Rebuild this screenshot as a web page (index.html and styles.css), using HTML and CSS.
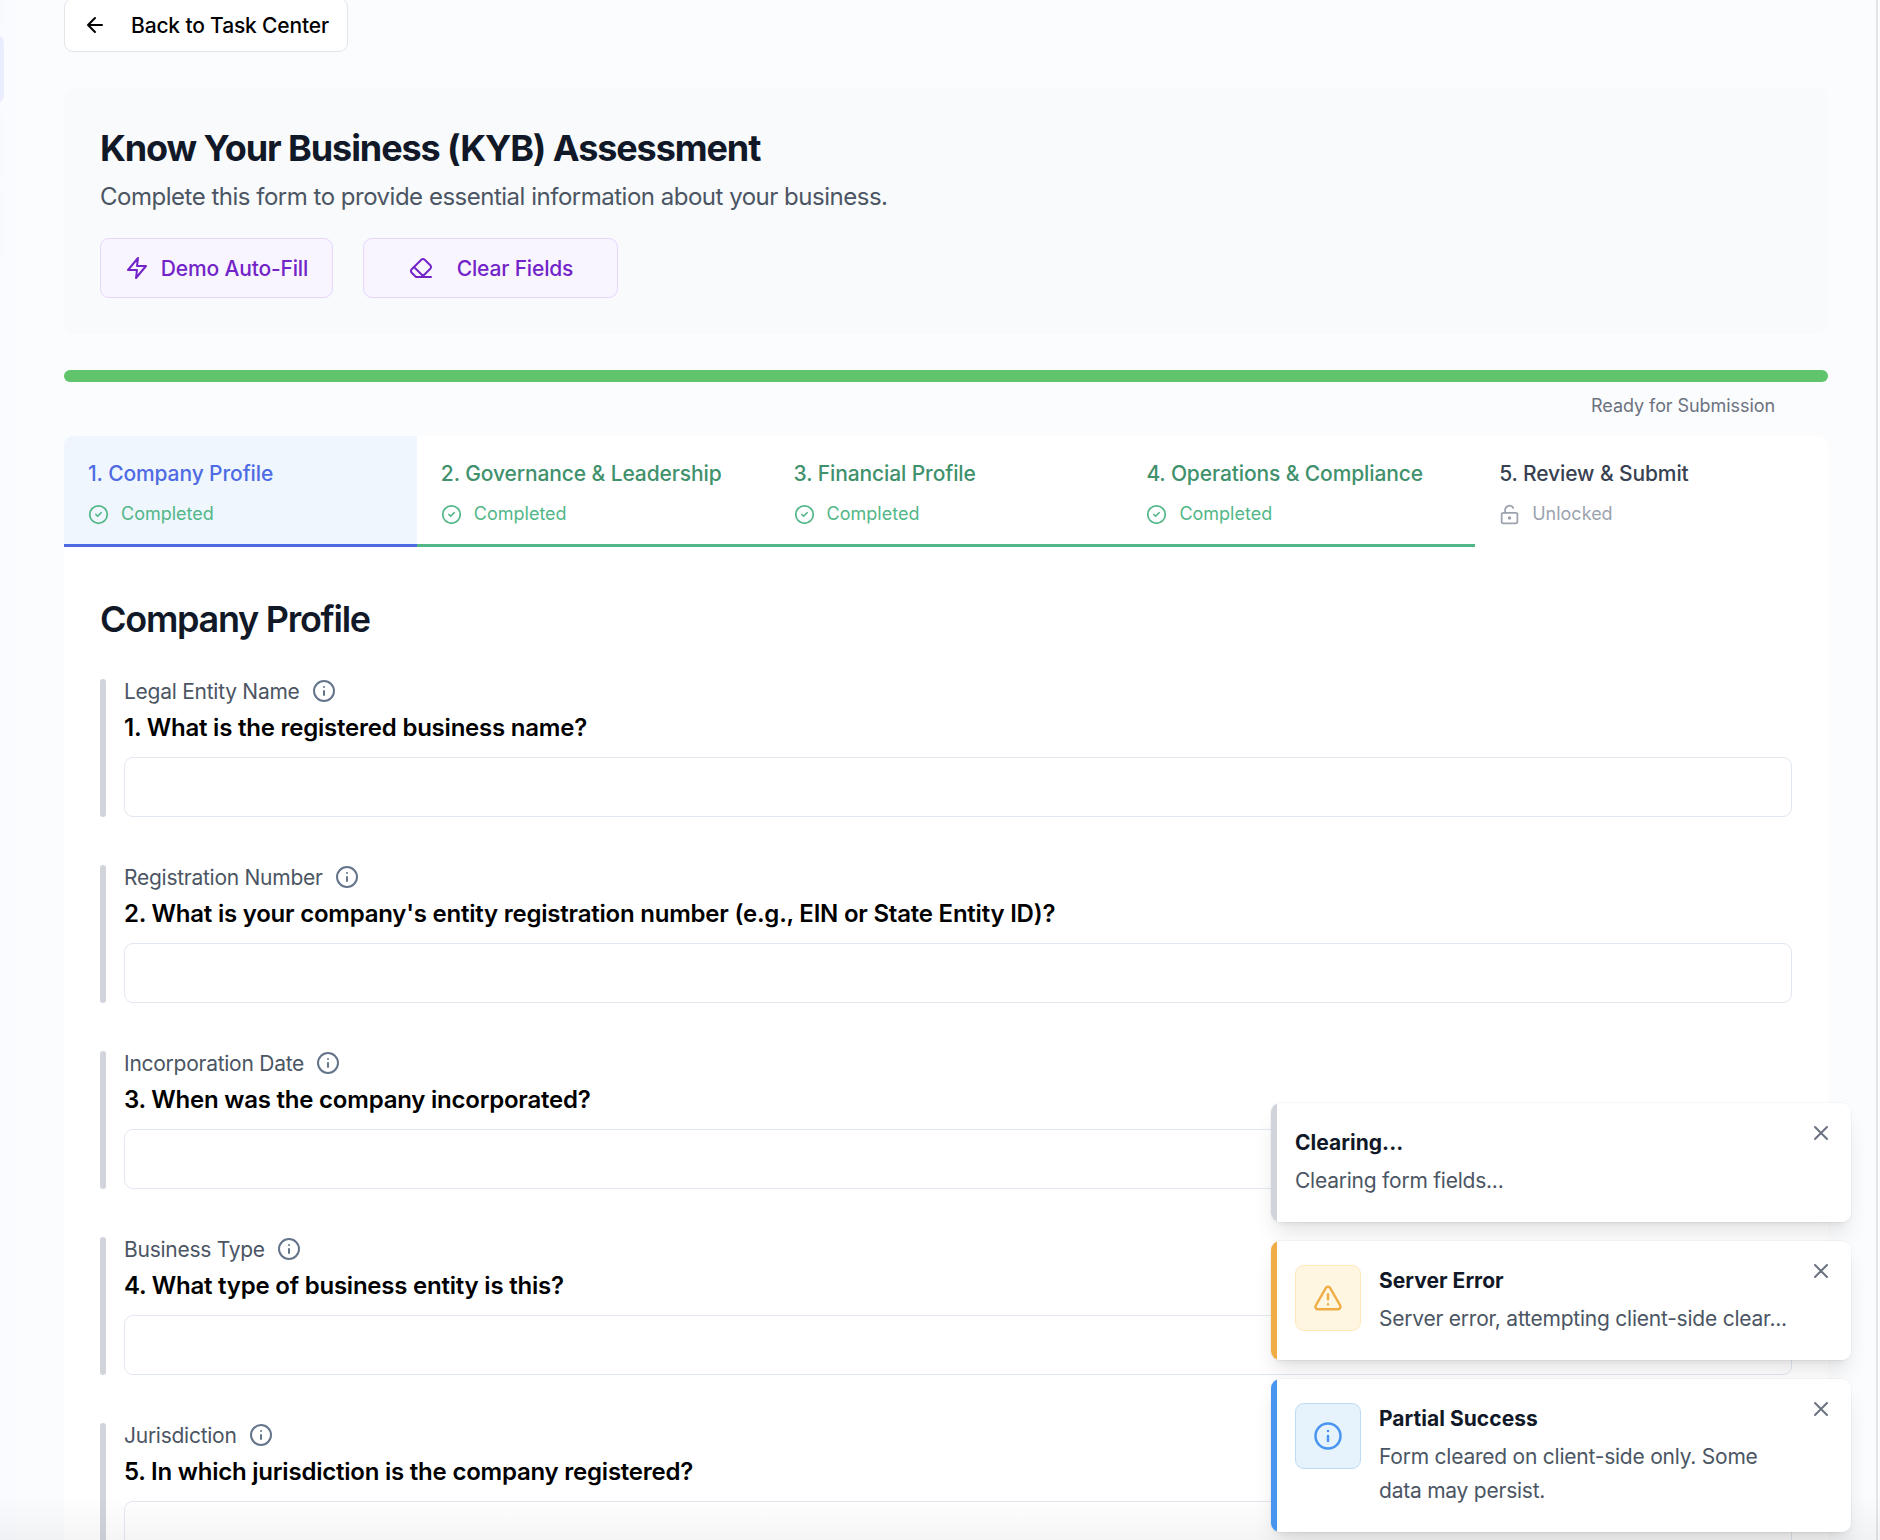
FILE: index.html
```html
<!DOCTYPE html>
<html lang="en">
<head>
<meta charset="utf-8">
<title>KYB Assessment</title>
<link rel="stylesheet" href="styles.css">
</head>
<body>
<svg class="sprite" aria-hidden="true">
  <symbol id="check" viewBox="0 0 24 24"><circle cx="12" cy="12" r="10"/><path d="m9 12 2 2 4-4"/></symbol>
  <symbol id="info" viewBox="0 0 24 24"><circle cx="12" cy="12" r="10"/><path d="M12 16v-4M12 8h.01"/></symbol>
  <symbol id="close" viewBox="0 0 24 24"><path d="M18 6 6 18M6 6l12 12"/></symbol>
</svg>
<div class="app">
  <aside class="rail"><span class="rail-item"></span><span class="rail-item rail-item-active"></span><span class="rail-item"></span><span class="rail-item"></span></aside>
  <main class="main">
    <button class="back"><svg class="icon icon-24" viewBox="0 0 24 24"><path d="m12 19-7-7 7-7M19 12H5"/></svg><span>Back to Task Center</span></button>
    <header class="intro">
      <h1 class="title">Know Your Business (KYB) Assessment</h1>
      <p class="subtitle">Complete this form to provide essential information about your business.</p>
      <div class="actions">
        <button class="action action-fill"><svg class="icon icon-24" viewBox="0 0 24 24"><path d="M13 2 3 14h9l-1 8 10-12h-9l1-8z"/></svg><span>Demo Auto-Fill</span></button>
        <button class="action action-clear"><svg class="icon icon-24" viewBox="0 0 24 24"><path d="m7 21-4.3-4.3c-1-1-1-2.5 0-3.4l9.6-9.6c1-1 2.5-1 3.4 0l5.6 5.6c1 1 1 2.5 0 3.4L13 21M22 21H7M5 11l9 9"/></svg><span>Clear Fields</span></button>
      </div>
    </header>
    <div class="progress"></div>
    <p class="progress-note">Ready for Submission</p>
    <section class="card">
      <nav class="tabs">
        <div class="tab tab-active"><span class="tab-title">1. Company Profile</span><span class="tab-status"><svg class="icon icon-21"><use href="#check"/></svg>Completed</span></div>
        <div class="tab tab-done"><span class="tab-title">2. Governance &amp; Leadership</span><span class="tab-status"><svg class="icon icon-21"><use href="#check"/></svg>Completed</span></div>
        <div class="tab tab-done"><span class="tab-title">3. Financial Profile</span><span class="tab-status"><svg class="icon icon-21"><use href="#check"/></svg>Completed</span></div>
        <div class="tab tab-done"><span class="tab-title">4. Operations &amp; Compliance</span><span class="tab-status"><svg class="icon icon-21"><use href="#check"/></svg>Completed</span></div>
        <div class="tab"><span class="tab-title">5. Review &amp; Submit</span><span class="tab-status tab-status-open"><svg class="icon icon-21" viewBox="0 0 24 24"><circle cx="12" cy="16" r="1"/><rect x="3" y="10" width="18" height="12" rx="2"/><path d="M7 10V7a5 5 0 0 1 9.33-2.5"/></svg>Unlocked</span></div>
      </nav>
      <div class="form">
        <h2 class="form-title">Company Profile</h2>
        <div class="field"><div class="label">Legal Entity Name<svg class="icon icon-24"><use href="#info"/></svg></div><div class="question">1. What is the registered business name?</div><input class="input"></div>
        <div class="field"><div class="label">Registration Number<svg class="icon icon-24"><use href="#info"/></svg></div><div class="question">2. What is your company's entity registration number (e.g., EIN or State Entity ID)?</div><input class="input"></div>
        <div class="field"><div class="label">Incorporation Date<svg class="icon icon-24"><use href="#info"/></svg></div><div class="question">3. When was the company incorporated?</div><input class="input"></div>
        <div class="field"><div class="label">Business Type<svg class="icon icon-24"><use href="#info"/></svg></div><div class="question">4. What type of business entity is this?</div><input class="input"></div>
        <div class="field"><div class="label">Jurisdiction<svg class="icon icon-24"><use href="#info"/></svg></div><div class="question">5. In which jurisdiction is the company registered?</div><input class="input"></div>
      </div>
    </section>
  </main>
  <div class="edge"></div>
  <div class="bottom-fade"></div>
  <div class="toasts">
    <div class="toast">
      <div class="toast-text"><strong class="toast-title">Clearing...</strong><p class="toast-desc">Clearing form fields...</p></div>
      <svg class="icon icon-24 toast-close"><use href="#close"/></svg>
    </div>
    <div class="toast toast-warn">
      <div class="toast-icon"><svg class="icon icon-30" viewBox="0 0 24 24"><path d="m21.73 18-8-14a2 2 0 0 0-3.48 0l-8 14A2 2 0 0 0 4 21h16a2 2 0 0 0 1.73-3M12 9v4M12 17h.01"/></svg></div>
      <div class="toast-text"><strong class="toast-title">Server Error</strong><p class="toast-desc">Server error, attempting client-side clear...</p></div>
      <svg class="icon icon-24 toast-close"><use href="#close"/></svg>
    </div>
    <div class="toast toast-info">
      <div class="toast-icon"><svg class="icon icon-30"><use href="#info"/></svg></div>
      <div class="toast-text"><strong class="toast-title">Partial Success</strong><p class="toast-desc">Form cleared on client-side only. Some data may persist.</p></div>
      <svg class="icon icon-24 toast-close"><use href="#close"/></svg>
    </div>
  </div>
</div>
</body>
</html>
```
FILE: styles.css
```css
* { box-sizing: border-box; margin: 0; }
body { font-family: Inter, "Liberation Sans", sans-serif; font-size: 21px; background: #fbfcfe; color: #000; }
button { font: inherit; }
.sprite { position: absolute; width: 0; height: 0; }
.app { position: relative; width: 1880px; height: 1540px; overflow: hidden; display: flex; }
.icon { fill: none; stroke: currentColor; stroke-width: 2; stroke-linecap: round; stroke-linejoin: round; flex: none; }
.icon-21 { width: 21px; height: 21px; }
.icon-24 { width: 24px; height: 24px; }
.icon-30 { width: 30px; height: 30px; }

.rail { width: 16px; display: flex; flex-direction: column; gap: 12px; flex: none; background: #fafbfe; }
.rail-item { width: 4px; height: 66px; background: #f8f9fd; border-radius: 0 4px 4px 0 / 0 9px 9px 0; flex: none; }
.rail-item:first-child { height: 24px; }
.rail-item-active { background: #e9edfe; }

.main { flex: none; width: 1764px; margin-left: 48px; }
.back { display: flex; align-items: center; gap: 24px; height: 54px; margin-top: -2px; width: 284px; padding: 0 18px; background: #fff; border: 1px solid #e2e5ea; border-radius: 9px; font-weight: 500; letter-spacing: -0.16px; white-space: nowrap; color: #000; }

.intro { margin-top: 36px; height: 246px; padding: 36px; background: #f9fafc; border-radius: 9px; }
.title { font-size: 36px; line-height: 48px; font-weight: 700; letter-spacing: -1.1px; color: #111827; }
.subtitle { font-size: 24px; line-height: 36px; margin-top: 7px; letter-spacing: -0.49px; color: #4b5563; }
.actions { display: flex; gap: 30px; margin-top: 23px; }
.action { display: flex; align-items: center; justify-content: center; height: 60px; padding: 0; background: #f9f5fe; border: 1px solid #e6d6fb; border-radius: 9px; color: #7224c9; font-weight: 500; letter-spacing: -0.16px; white-space: nowrap; }
.action-fill { width: 233px; gap: 12px; }
.action-clear { width: 255px; gap: 24px; padding-left: 1px; }

.progress { height: 12px; margin-top: 36px; border-radius: 6px; background: #5fc46b; }
.progress-note { margin: 12px 53px 0 0; text-align: right; font-size: 18px; line-height: 24px; letter-spacing: -0.07px; color: #6b7280; }

.card { margin-top: 18px; background: #fff; border-radius: 9px 9px 0 0; height: 1140px; }
.tabs { display: grid; grid-template-columns: repeat(5, 1fr); height: 111px; }
.tab { padding: 23px 24px 0; display: flex; flex-direction: column; gap: 10px; border-bottom: 3px solid transparent; color: #374151; white-space: nowrap; }
.tab-title { line-height: 30px; font-weight: 500; letter-spacing: -0.11px; }
.tab-status { display: flex; align-items: center; gap: 12px; font-size: 18px; line-height: 30px; color: #52b788; }
.tab-status-open { color: #9ca3af; }
.tab-active { background: #eff6fe; color: #4f6be3; border-color: #4f6be3; border-top-left-radius: 9px; }
.tab-done { color: #40916c; border-color: #52b788; }

.form { padding: 48px 36px 0; }
.form-title { font-size: 36px; line-height: 48px; font-weight: 600; letter-spacing: -1.28px; color: #111827; margin-bottom: 36px; }
.field { position: relative; height: 138px; padding-left: 24px; margin-bottom: 48px; }
.field::before { content: ""; position: absolute; left: 0; top: 0; width: 6px; height: 138px; border-radius: 3px; background: #d1d5db; }
.label { display: flex; align-items: center; gap: 12px; height: 24px; letter-spacing: -0.26px; color: #4b5563; }
.label .icon { color: #64748b; }
.question { margin-top: 7px; font-size: 24px; line-height: 36px; font-weight: 600; letter-spacing: -0.22px; white-space: nowrap; }
.input { display: block; width: 100%; height: 60px; margin-top: 11px; border: 1px solid #e2e8f0; border-radius: 9px; background: #fff; }

.edge { position: absolute; right: 2px; top: 0; width: 2px; height: 1540px; background: #e5e5e5; }
.bottom-fade { position: absolute; left: 0; right: 0; bottom: 0; height: 45px; background: linear-gradient(rgba(0,0,0,0), rgba(0,0,0,.04)); }

.toasts { position: absolute; left: 1271px; top: 1103px; width: 580px; display: flex; flex-direction: column; gap: 19px; }
.toast { --accent: #d1d5db; position: relative; display: flex; gap: 18px; min-height: 119px; padding: 24px 54px 24px 24px; background: linear-gradient(to right, var(--accent) 6px, #fff 6px); border-radius: 9px; box-shadow: 0 0 0 1px rgba(0,0,0,.03), 0 15px 22px -4px rgba(0,0,0,.1), 0 6px 9px -6px rgba(0,0,0,.1); }
.toast-warn { --accent: #f0ad45; }
.toast-info { --accent: #4895ef; }
.toast-icon { width: 66px; height: 66px; flex: none; display: grid; place-items: center; border-radius: 9px; }
.toast-warn .toast-icon { color: #f0ad45; background: #fef6e0; border: 1px solid #fdeab8; }
.toast-info .toast-icon { color: #4895ef; background: #e6f2fc; border: 1px solid #bfdcf7; }
.toast-title { display: block; line-height: 32px; font-weight: 700; letter-spacing: 0.03px; color: #111827; }
.toast-desc { margin-top: 5px; line-height: 34px; letter-spacing: -0.23px; color: #4b5563; }
.toast-close { position: absolute; right: 18px; top: 18px; color: #6b7280; }
```
